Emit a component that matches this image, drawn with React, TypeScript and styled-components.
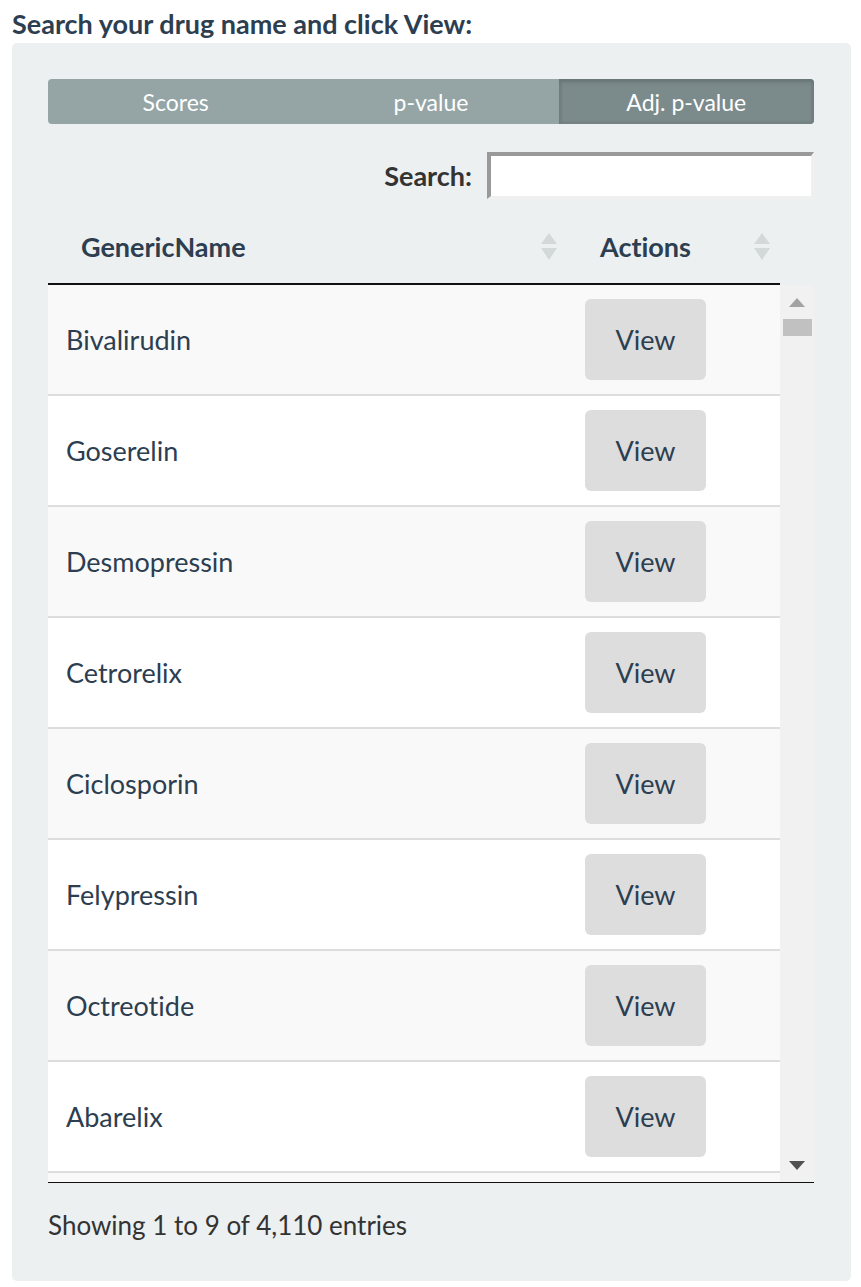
import React from "react";
import styled, { createGlobalStyle } from "styled-components";

const GlobalStyle = createGlobalStyle`
    body {
        margin: 0;
        background: #ffffff;
        font-family: Lato, "Open Sans", sans-serif;
        font-variant-ligatures: none;
    }
`

const Page = styled.div`
    padding: 8px 10px 7px 12px;
`

const Title = styled.h3`
    margin: 0 0 3px 0;
    font-size: 27px;
    line-height: 32px;
    font-weight: 700;
    color: #2c3e50;
`

const Well = styled.div`
    background: #ecf0f1;
    border-radius: 5px;
    padding: 36px 37px 40px 36px;
`

const Tabs = styled.div`
    display: grid;
    grid-template-columns: repeat(3, 1fr);
    height: 45px;
    border-radius: 4px;
    overflow: hidden;
    background: #95a5a6;
`

const Tab = styled.div<{ $active?: boolean }>`
    display: flex;
    align-items: center;
    justify-content: center;
    color: #ffffff;
    font-size: 23px;
    background: ${p => p.$active ? '#7b8a8b' : 'transparent'};
    box-shadow: ${p => p.$active ? 'inset 0 3px 5px rgba(0,0,0,0.125), inset 0 0 0 3px rgba(0,0,0,0.04)' : 'none'};
`

const SearchRow = styled.label`
    display: flex;
    justify-content: flex-end;
    align-items: center;
    gap: 15px;
    margin-top: 28px;
    font-size: 27px;
    font-weight: 700;
    color: #333333;
`

const SearchInput = styled.input`
    box-sizing: border-box;
    width: 327px;
    height: 47px;
    border-style: solid;
    border-width: 4px 3px 3px 4px;
    border-color: #999999 #f0f0f0 #f0f0f0 #999999;
    background: #ffffff;
    outline: none;
`

const Columns = `
    display: grid;
    grid-template-columns: 519px 213px;
`

const HeadRow = styled.div`
    ${Columns}
    width: 732px;
    height: 84px;
    border-bottom: 2px solid #111111;
`

const HeadCell = styled.div`
    display: flex;
    align-items: center;
    justify-content: space-between;
    padding: 10px 10px 0 33px;
    font-size: 27px;
    font-weight: 700;
    color: #2c3e50;
`

const Body = styled.div`
    display: flex;
    height: 897px;
    border-bottom: 1px solid #111111;
`

const Rows = styled.div`
    width: 732px;
    overflow: hidden;
`

const Row = styled.div<{ $odd: boolean }>`
    ${Columns}
    height: 109px;
    border-bottom: 2px solid #dddddd;
    background: ${p => p.$odd ? '#f9f9f9' : '#ffffff'};
`

const NameCell = styled.div`
    display: flex;
    align-items: center;
    padding-left: 18px;
    font-size: 27px;
    color: #2c3e50;
`

const ActionCell = styled.div`
    display: flex;
    align-items: center;
    padding-left: 18px;
`

const ViewButton = styled.button`
    width: 121px;
    height: 81px;
    border: none;
    border-radius: 6px;
    background: #dddddd;
    font-family: inherit;
    font-variant-ligatures: none;
    font-size: 27px;
    color: #2c3e50;
    cursor: pointer;
`

const Scrollbar = styled.div`
    display: flex;
    flex-direction: column;
    width: 34px;
    background: #f1f1f1;
`

const ArrowBox = styled.div`
    display: flex;
    align-items: center;
    justify-content: center;
    height: 34px;
`

const Thumb = styled.div`
    height: 17px;
    margin: 0 2px 0 3px;
    background: #c1c1c1;
`

const Track = styled.div`
    flex: 1;
`

const Footer = styled.div`
    margin-top: 26px;
    font-size: 26px;
    line-height: 32px;
    color: #333333;
`

const SortIcon = () => (
    <svg width="16" height="27" viewBox="0 0 16 27">
        <polygon points="8,0 16,11 0,11" fill="#d3d8d9"/>
        <polygon points="0,15 16,15 8,27" fill="#d3d8d9"/>
    </svg>
)

const Triangle = ({ down, color }: { down?: boolean, color: string }) => (
    <svg width="16" height="9" viewBox="0 0 16 9">
        <polygon points={down ? "0,0 16,0 8,9" : "8,0 16,9 0,9"} fill={color}/>
    </svg>
)

const drugs = [
    "Bivalirudin",
    "Goserelin",
    "Desmopressin",
    "Cetrorelix",
    "Ciclosporin",
    "Felypressin",
    "Octreotide",
    "Abarelix",
]

export default function App() {
    return (
        <Page>
            <GlobalStyle/>
            <Title>Search your drug name and click View:</Title>
            <Well>
                <Tabs>
                    <Tab>Scores</Tab>
                    <Tab>p-value</Tab>
                    <Tab $active>Adj. p-value</Tab>
                </Tabs>
                <SearchRow>
                    Search:
                    <SearchInput type="search"/>
                </SearchRow>
                <HeadRow>
                    <HeadCell>GenericName<SortIcon/></HeadCell>
                    <HeadCell>Actions<SortIcon/></HeadCell>
                </HeadRow>
                <Body>
                    <Rows>
                        {drugs.map((name, i) => (
                            <Row key={name} $odd={i % 2 === 0}>
                                <NameCell>{name}</NameCell>
                                <ActionCell><ViewButton>View</ViewButton></ActionCell>
                            </Row>
                        ))}
                        <Row $odd={true}/>
                    </Rows>
                    <Scrollbar>
                        <ArrowBox><Triangle color="#a3a3a3"/></ArrowBox>
                        <Thumb/>
                        <Track/>
                        <ArrowBox><Triangle down color="#505050"/></ArrowBox>
                    </Scrollbar>
                </Body>
                <Footer>Showing 1 to 9 of 4,110 entries</Footer>
            </Well>
        </Page>
    )
}
